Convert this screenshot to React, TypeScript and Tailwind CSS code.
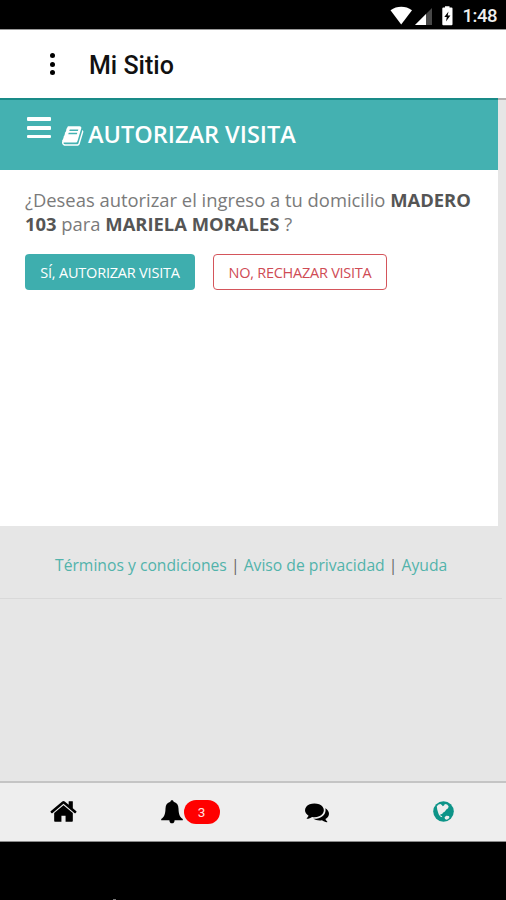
import React from "react";

function BookIcon() {
  return (
    <svg viewBox="0 0 1792 1792" className="h-[24px] w-[23px] shrink-0" fill="currentColor">
      <path d="M1639 478q40 57 18 129l-275 906q-19 64-76.5 107.5t-122.5 43.5h-923q-77 0-148.5-53.5t-99.5-131.5q-24-67-2-127 0-4 3-27t4-37q1-8-3-21.5t-3-19.5q2-11 8-21t16.5-23.5 16.5-23.5q23-38 45-91.5t30-91.5q3-10 .5-30t-.5-28q3-11 17-28t17-23q21-36 42-92t25-90q1-9-2.5-32t.5-28q4-13 22-30.5t22-22.5q19-26 42.5-84.5t27.5-96.5q1-8-3-25.5t-2-26.5q2-8 9-18t18-23 17-21q8-12 16.5-30.5t15-35 16-36 19.5-32 26.5-23.5 36-11.5 47.5 5.5l-1 3q38-9 51-9h761q74 0 114 56t18 130l-274 906q-36 119-71.5 153.5t-128.5 34.5h-869q-27 0-38 15-11 16-1 43 24 70 144 70h923q29 0 56-15.5t35-41.5l300-987q7-22 5-57 38 15 59 43zm-1064 2q-4 13 2 22.5t20 9.5h608q13 0 25.5-9.5t16.5-22.5l21-64q4-13-2-22.5t-20-9.5h-608q-13 0-25.5 9.5t-16.5 22.5zm-83 256q-4 13 2 22.5t20 9.5h608q13 0 25.5-9.5t16.5-22.5l21-64q4-13-2-22.5t-20-9.5h-608q-13 0-25.5 9.5t-16.5 22.5z" />
    </svg>
  );
}

function HomeIcon() {
  return (
    <svg viewBox="0 0 1792 1792" className="h-[29px] w-[29px]" fill="currentColor">
      <path d="M1472 992v480q0 26-19 45t-45 19h-384v-384h-256v384h-384q-26 0-45-19t-19-45v-480q0-1 .5-3t.5-3l575-474 575 474q1 2 1 6zm223-69l-62 74q-8 9-21 11h-3q-13 0-21-7l-692-577-692 577q-12 8-24 7-13-2-21-11l-62-74q-8-10-7-23.5t11-21.5l719-599q32-26 76-26t76 26l244 204v-195q0-14 9-23t23-9h192q14 0 23 9t9 23v408l219 182q10 8 11 21.5t-7 23.5z" />
    </svg>
  );
}

function BellIcon() {
  return (
    <svg viewBox="0 0 22 24" className="h-[24px] w-[22px]" fill="currentColor">
      <path d="M11 .3c1 0 1.600.6 1.600 1.500 3.200.8 4.800 3.200 4.900 6.600.1 5.200 1.100 8.400 4.300 10.700v1.100h-8.200c0 2-.9 3.100-2.600 3.100s-2.600-1.100-2.600-3.100H.2v-1.100c3.200-2.300 4.200-5.500 4.300-10.700.1-3.400 1.700-5.800 4.900-6.600C9.400.9 10 .3 11 .3Z" />
    </svg>
  );
}

function ChatIcon() {
  return (
    <svg viewBox="0 0 1792 1792" className="h-[24px] w-[24px]" fill="currentColor">
      <path d="M1408 768q0 139-94 257t-256.5 186.5-353.5 68.5q-86 0-176-16-124 88-278 128-36 9-86 16h-3q-11 0-20.500-8t-11.500-21q-1-3-1-6.500t.5-6.500 2-6l2.500-5 3.500-5.500 4-5 4.500-5 4-4.500q5-6 23-25t26-29.500 22.500-29 25-38.500 20.500-44q-124-72-195-177t-71-224q0-139 94-257t256.500-186.500 353.500-68.500 353.500 68.500 256.500 186.500 94 257zm384 256q0 120-71 224.500t-195 176.500q10 24 20.500 44t25 38.500 22.500 29 26 29.500 23 25q1 1 4 4.500t4.500 5 4 5 3.500 5.500l2.500 5 2 6 .5 6.500-1 6.500q-3 14-13 22t-22 7q-50-7-86-16-154-40-278-128-90 16-176 16-271 0-472-132 58 4 88 4 161 0 309-45t264-129q125-92 192-212t67-254q0-77-23-152 129 71 204 178t75 230z" />
    </svg>
  );
}

function EarthIcon() {
  return (
    <svg viewBox="0 0 21 21" className="h-[21px] w-[21px]">
      <circle cx="10.500" cy="10.500" r="10.300" fill="#0d9488" />
      <g fill="#eeeeee">
        <path d="M3.800 5.200 5.500 3.500 7.500 3l1.600 1.200.5 1.100 1.400-.9.900-1.300 2.200.4 1.500 1.700-.5 2-1.800 1.200-1.400 2-2 1.300-.7 1.300-1.700.3-.2 1.100 1.600.6.4 1.200-2-.7-1.500-1.900-.7-2.200L4.200 8.500Z" />
        <path d="m11.600 16.200 1.600-1.500 2.600.4.700 1.200-1.200 1.700-1.800.8-1.500-.9Z" />
      </g>
    </svg>
  );
}

function StatusBar() {
  return (
    <div className="flex h-[30px] shrink-0 items-center justify-end border-b border-[#999] bg-black pr-[9px] text-white">
      <svg viewBox="0 0 68 22" className="mr-[6px] h-[22px] w-[68px]">
        <path d="M1.500 6.300C8 1.700 16.500 1.700 23 6.300L12.200 20.500Z" fill="white" />
        <path d="M43 4v17H26Z" fill="#484848" />
        <path d="M37 10v11H26Z" fill="white" />
        <path d="M54.300 3.500h1.700V2.200h4.500v1.300h2q1 0 1 1v15.800q0 1-1 1h-8.200q-1 0-1-1V4.500q0-1 1-1Z" fill="white" />
        <path d="M59.500 7.500 55.300 13h2.500l-.8 4.500 4.400-6h-2.700Z" fill="black" />
      </svg>
      <span className="mt-[3px] font-[Roboto,sans-serif] text-[18.500px] leading-[22px] font-medium tracking-[-0.500px] text-[#eee]">1:48</span>
    </div>
  );
}

export default function App() {
  return (
    <div className="flex h-[900px] w-[506px] flex-col overflow-hidden bg-[#e6e6e6] font-['Open_Sans',sans-serif]">
      <StatusBar />
      <header className="flex h-[68px] shrink-0 items-center bg-white pl-[50px]">
        <div className="flex w-[5px] flex-col gap-[3.500px]">
          <i className="size-[5px] rounded-full bg-black" />
          <i className="size-[5px] rounded-full bg-black" />
          <i className="size-[5px] rounded-full bg-black" />
        </div>
        <h1 className="ml-[34px] pt-[3px] font-[Roboto,sans-serif] text-[25px] leading-[30px] font-medium text-[#111]">Mi Sitio</h1>
      </header>

      <div className="flex h-[428px] shrink-0">
        <main className="flex w-[498px] shrink-0 flex-col bg-white">
          <div className="flex h-[72px] shrink-0 border-t-2 border-[#198b88] bg-[#44b1b1] pl-[27px] text-white">
            <div className="mt-[17px] flex w-[24px] flex-col gap-[5px]">
              <i className="h-[4px] rounded-[1px] bg-white" />
              <i className="h-[4px] rounded-[1px] bg-white" />
              <i className="h-[3px] rounded-[1px] bg-white" />
            </div>
            <div className="mt-[18px] ml-[11px] flex h-[32px] items-center">
              <div className="pt-[3px]"><BookIcon /></div>
              <h2 className="ml-[3px] text-[23.500px] leading-[32px] font-semibold whitespace-nowrap">AUTORIZAR VISITA</h2>
            </div>
          </div>
          <p className="mt-[18px] pl-[25px] text-[18.400px] leading-[24px] whitespace-nowrap text-[#7a7a7a]">
            ¿Deseas autorizar el ingreso a tu domicilio <b className="font-bold text-[#555]">MADERO</b>
            <br />
            <b className="font-bold text-[#555]">103</b> para <b className="font-bold text-[#555]">MARIELA MORALES</b> ?
          </p>
          <div className="mt-[18px] flex gap-[18px] pl-[25px]">
            <button className="h-[36px] w-[170px] rounded-[4px] bg-[#3eaeae] pt-[2px] text-[14.500px] tracking-[-0.200px] whitespace-nowrap text-white">SÍ, AUTORIZAR VISITA</button>
            <button className="h-[36px] w-[174px] rounded-[4px] border-[1.500px] border-[#d4555b] pt-[2px] text-[14.500px] tracking-[-0.250px] whitespace-nowrap text-[#cf4b55]">NO, RECHAZAR VISITA</button>
          </div>
        </main>
        <div className="grow border-t-2 border-[#b5b0b0]" />
      </div>

      <footer className="h-[73px] w-[502px] shrink-0 border-b border-[#d9d9d9] pt-[27px] pl-[55px] text-[15.700px] leading-[24px] whitespace-nowrap text-[#666]">
        <a className="text-[#52b3ab]">Términos y condiciones</a> | <a className="text-[#52b3ab]">Aviso de privacidad</a> | <a className="text-[#52b3ab]">Ayuda</a>
      </footer>

      <div className="grow" />

      <nav className="grid h-[61px] shrink-0 grid-cols-4 items-center border-t-2 border-b border-t-[#c4c4c4] border-b-[#8a8a8a] bg-[#eeeeee] pb-px pl-[2px] text-black">
        <div className="flex justify-center pr-[3px]"><HomeIcon /></div>
        <div className="flex items-center justify-center pr-[2px]">
          <BellIcon />
          <span className="ml-[1px] flex h-[24px] w-[36px] items-center justify-center rounded-full bg-[#ff0000] pt-[2px] font-[Roboto,sans-serif] text-[13.500px] text-[#ffe0e0]">3</span>
        </div>
        <div className="flex justify-center"><ChatIcon /></div>
        <div className="flex justify-center"><EarthIcon /></div>
      </nav>
      <div className="flex h-[58px] shrink-0 items-end bg-black pl-[113px]">
        <i className="h-px w-[3px] bg-[#777]" />
      </div>
    </div>
  );
}
